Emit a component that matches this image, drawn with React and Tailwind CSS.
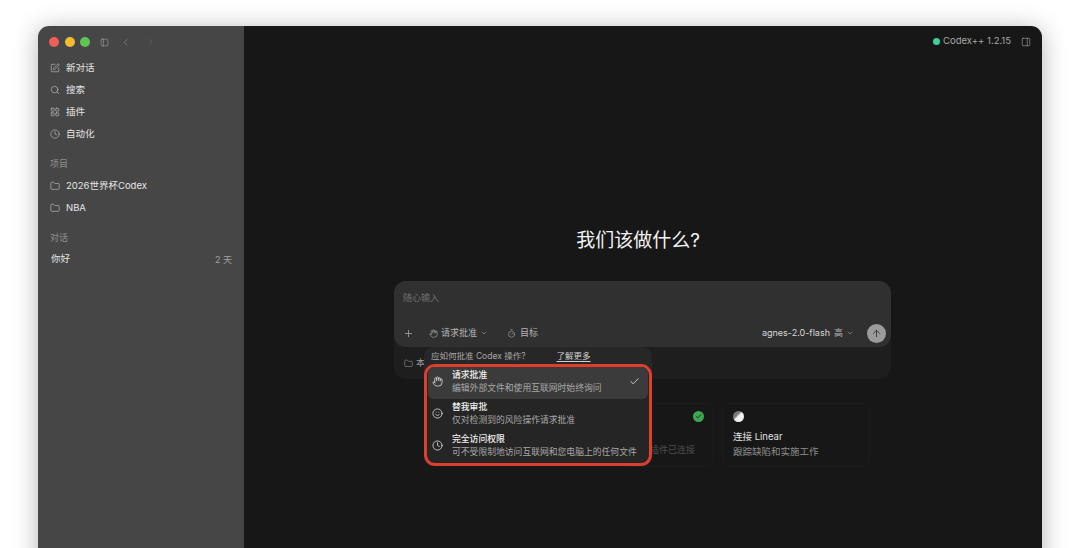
import React from 'react';
import { SquarePen, Search, LayoutGrid, Clock, Folder, Plus, Hand, ChevronDown, ArrowUp, Check, Smile, PanelLeft, PanelRight, ChevronLeft, ChevronRight, Timer } from 'lucide-react';

const FONT = "font-['Inter','Noto_Sans_CJK_SC',sans-serif]";

const NavItem = ({ icon: Icon, label }) => (
  <div className="flex h-[22px] items-center gap-[6px] px-[12px] text-[9.5px] text-[#e4e4e4]">
    <Icon className="h-[10px] w-[10px] text-[#c4c4c4]" strokeWidth={1.5} />
    <span>{label}</span>
  </div>
);

const ApprovalOption = ({ icon: Icon, title, desc, selected }) => (
  <div className={`flex h-[32px] items-center rounded-md pl-[4px] pr-[7px] ${selected ? 'bg-[#3b3b3b]' : ''}`}>
    <Icon className="mb-[3px] mr-[9px] h-[11px] w-[11px] shrink-0 text-[#e0e0e0]" strokeWidth={1.75} />
    <div className="mb-[3px] min-w-0 flex-1 leading-[12.5px]">
      <div className="text-[8.8px] font-medium text-[#f0f0f0]">{title}</div>
      <div className="whitespace-nowrap text-[8.8px] text-[#a8a8a8]">{desc}</div>
    </div>
    {selected && <Check className="mb-[3px] mr-[1px] h-[11px] w-[11px] text-[#e8e8e8]" strokeWidth={1.75} />}
  </div>
);

export default function App() {
  return (
    <div className={`h-[548px] w-[1080px] overflow-hidden bg-white px-[38px] pt-[26px] ${FONT}`}>
      <div className="flex h-[560px] overflow-hidden rounded-t-[11px] shadow-[0_3px_24px_rgba(0,0,0,0.3)]">
        {/* sidebar */}
        <aside className="w-[206px] shrink-0 bg-[#464646]">
          <div className="flex h-[31px] items-center gap-[5.5px] pl-[11px] pt-[1px]">
            <span className="h-[10px] w-[10px] rounded-full bg-[#ee5f57]" />
            <span className="h-[10px] w-[10px] rounded-full bg-[#f5bd2e]" />
            <span className="h-[10px] w-[10px] rounded-full bg-[#5fc454]" />
            <PanelLeft className="ml-[4px] h-[9px] w-[9px] text-[#aaaaaa]" strokeWidth={1.5} />
            <ChevronLeft className="ml-[6px] h-[11px] w-[11px] text-[#8d8d8d]" strokeWidth={1.5} />
            <ChevronRight className="ml-[9px] h-[10px] w-[10px] text-[#6e6e6e]" strokeWidth={1.5} />
          </div>
          <div>
            <NavItem icon={SquarePen} label="新对话" />
            <NavItem icon={Search} label="搜索" />
            <NavItem icon={LayoutGrid} label="插件" />
            <NavItem icon={Clock} label="自动化" />
          </div>
          <div className="px-[12px] pt-[11px] text-[9px] leading-[16px] text-[#8f8f8f]">项目</div>
          <div className="pt-[3px]">
            <NavItem icon={Folder} label="2026世界杯Codex" />
            <NavItem icon={Folder} label="NBA" />
          </div>
          <div className="px-[12px] pt-[11px] text-[9px] leading-[16px] text-[#8f8f8f]">对话</div>
          <div className="flex h-[22px] items-center justify-between pl-[13px] pr-[12px] pt-[5px] text-[9.5px] text-[#e8e8e8]">
            <span>你好</span>
            <span className="text-[9px] text-[#a0a0a0]">2 天</span>
          </div>
        </aside>

        {/* main */}
        <main className="relative flex min-w-0 flex-1 flex-col items-center bg-[#171717]">
          <div className="flex h-[31px] w-full items-center justify-end pr-[11px]">
            <span className="mr-[3px] h-[7px] w-[7px] rounded-full bg-[#3ecf9a]" />
            <span className="text-[9.5px] text-[#a8a8a8]">Codex++ 1.2.15</span>
            <PanelRight className="ml-[10px] h-[10px] w-[10px] text-[#a0a0a0]" strokeWidth={1.5} />
          </div>

          <h1 className="mr-[10px] mt-[171px] text-[19px] font-normal leading-[26px] text-[#f2f2f2]">我们该做什么?</h1>

          <div className="relative mr-[1px] mt-[27px] w-[497px]">
            <div className="rounded-[12px] bg-[#1e1e1e] pb-[1px]">
              <div className="h-[66px] rounded-[12px] bg-[#303030] pl-[9px] pr-[5px] pt-[10px]">
                <div className="text-[9px] leading-[14px] text-[#6f6f6f]">随心输入</div>
                <div className="mt-[16px] flex h-[24px] items-center text-[9px] text-[#b4b4b4]">
                  <Plus className="h-[11px] w-[11px] text-[#b4b4b4]" strokeWidth={1.5} />
                  <Hand className="ml-[15px] h-[9px] w-[9px]" strokeWidth={1.5} />
                  <span className="ml-[3px]">请求批准</span>
                  <ChevronDown className="ml-[3px] h-[8px] w-[8px]" strokeWidth={1.5} />
                  <Timer className="ml-[19px] h-[9px] w-[9px]" strokeWidth={1.5} />
                  <span className="ml-[4px]">目标</span>
                  <span className="ml-auto text-[#d8d8d8]">agnes-2.0-flash</span>
                  <span className="ml-[4px]">高</span>
                  <ChevronDown className="ml-[3px] h-[8px] w-[8px]" strokeWidth={1.5} />
                  <span className="ml-[13px] flex h-[19px] w-[19px] items-center justify-center rounded-full bg-[#9b9b9b]">
                    <ArrowUp className="h-[11px] w-[11px] text-[#2c2c2c]" strokeWidth={1.75} />
                  </span>
                </div>
              </div>
              <div className="flex h-[31px] items-center gap-[3px] pl-[10px] pt-[1px] text-[9px] text-[#9a9a9a]">
                <Folder className="h-[9px] w-[9px]" strokeWidth={1.5} />
                <span>本地</span>
              </div>
            </div>

            {/* approval popover */}
            <div className="absolute left-[30px] top-[66px] w-[228px] rounded-[9px] bg-[#272727] pt-[3px]">
              <div className="flex h-[13px] items-center gap-[31px] pl-[7px] text-[8.5px] text-[#a8a8a8]">
                <span>应如何批准 Codex 操作?</span>
                <span className="text-[#d0d0d0] underline underline-offset-2">了解更多</span>
              </div>
              <div className="mt-[1px] rounded-[11px] border-[3px] border-[#dd3f2f] bg-[#252525] px-[1px]">
                <ApprovalOption icon={Hand} title="请求批准" desc="编辑外部文件和使用互联网时始终询问" selected />
                <ApprovalOption icon={Smile} title="替我审批" desc="仅对检测到的风险操作请求批准" />
                <ApprovalOption icon={Clock} title="完全访问权限" desc="可不受限制地访问互联网和您电脑上的任何文件" />
              </div>
            </div>
          </div>

          {/* suggestion cards */}
          <div className="mr-[1px] mt-[24px] flex h-[64px] w-[497px] justify-end gap-[8px] pr-[21px]">
            <div className="flex w-[92px] flex-col items-end rounded-[8px] border border-[#1c1c1c] pr-[9px] pt-[7px]">
              <span className="flex h-[11px] w-[11px] items-center justify-center rounded-full bg-[#3fa652]">
                <Check className="h-[7px] w-[7px] text-[#10240f]" strokeWidth={3} />
              </span>
              <span className="mr-[9px] mt-[21px] whitespace-nowrap text-[9px] text-[#4e4e4e]">插件已连接</span>
            </div>
            <div className="w-[148px] rounded-[8px] border border-[#1c1c1c] pl-[10px] pt-[7px]">
              <span className="block h-[11px] w-[11px] rounded-full bg-[linear-gradient(135deg,#777_0%,#777_35%,#f0f0f0_50%,#f0f0f0_100%)]" />
              <div className="mt-[7px] text-[9.5px] leading-[15px] text-[#e0e0e0]">连接 Linear</div>
              <div className="text-[9.5px] leading-[15px] text-[#8d8d8d]">跟踪缺陷和实施工作</div>
            </div>
          </div>
        </main>
      </div>
    </div>
  );
}
